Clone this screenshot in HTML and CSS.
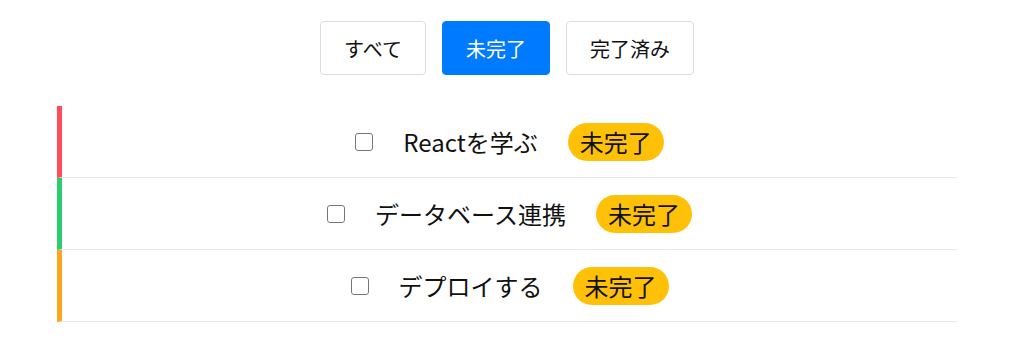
FILE: index.html
```html
<!DOCTYPE html>
<html lang="ja">
<head>
  <meta charset="UTF-8">
  <title>Todo</title>
  <link rel="stylesheet" href="styles.css">
</head>
<body>
  <div class="filters">
    <button class="filter-btn">すべて</button>
    <button class="filter-btn active">未完了</button>
    <button class="filter-btn">完了済み</button>
  </div>

  <ul class="todo-list">
    <li class="todo-item high">
      <input type="checkbox" class="todo-check">
      <span class="todo-text">Reactを学ぶ</span>
      <span class="badge">未完了</span>
    </li>
    <li class="todo-item low">
      <input type="checkbox" class="todo-check">
      <span class="todo-text">データベース連携</span>
      <span class="badge">未完了</span>
    </li>
    <li class="todo-item medium">
      <input type="checkbox" class="todo-check">
      <span class="todo-text">デプロイする</span>
      <span class="badge">未完了</span>
    </li>
  </ul>
</body>
</html>
```

FILE: styles.css
```css
* {
  box-sizing: border-box;
  margin: 0;
  padding: 0;
}

body {
  font-family: "Noto Sans CJK JP", "Noto Sans", sans-serif;
  background: #fff;
  color: #111;
  padding-right: 5px;
}

.filters {
  display: flex;
  justify-content: center;
  gap: 16px;
  padding-top: 21px;
  margin-bottom: 31px;
}

.filter-btn {
  font-family: inherit;
  font-size: 20px;
  height: 54px;
  padding: 0 23px;
  background: #fff;
  color: #111;
  border: 1px solid #ddd;
  border-radius: 4px;
}

.filter-btn.active {
  background: #007bff;
  border-color: #007bff;
  color: #fff;
}

.todo-list {
  list-style: none;
  width: 900px;
  margin: 0 auto;
}

.todo-item {
  display: flex;
  justify-content: center;
  align-items: center;
  gap: 30px;
  height: 72px;
  border-left: 5px solid #ccc;
  border-bottom: 1px solid #e8e8e8;
}

.todo-item.high {
  border-left-color: #ff4d5e;
}

.todo-item.low {
  border-left-color: #2ecc71;
}

.todo-item.medium {
  border-left-color: #ffa51f;
}

.todo-check {
  appearance: none;
  width: 18px;
  height: 18px;
  margin: 0;
  border: 1.5px solid #767676;
  border-radius: 3px;
  background: #fff;
}

.todo-text {
  font-size: 24px;
}

.badge {
  font-size: 24px;
  line-height: 30px;
  padding: 4px 12px;
  background: #ffc107;
  border-radius: 19px;
}
```
